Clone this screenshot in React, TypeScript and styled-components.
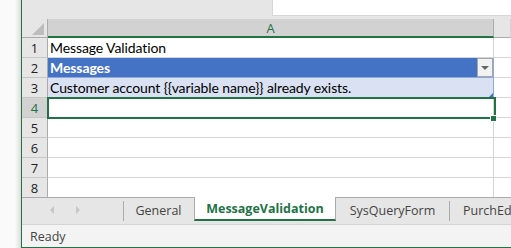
import styled, { createGlobalStyle } from 'styled-components'

const green = '#217346'
const grid = '#d4d4d4'
const uiFont = `'Open Sans', 'Noto Sans', sans-serif`
const cellFont = `'Lato', 'Liberation Sans', sans-serif`

const Global = createGlobalStyle`
	html, body {
		margin: 0;
		padding: 0;
	}
	body {
		width: 511px;
		height: 248px;
		overflow: hidden;
		background: #fafafa;
	}
`

const Frame = styled.div`
	display: flex;
	height: 248px;
`

const Shadow = styled.div`
	flex: none;
	width: 21px;
	background: linear-gradient(to right, #fafafa 0, #fafafa 15px, #dcdcdc 21px);
`

const Window = styled.div`
	flex: 1;
	min-width: 0;
	display: flex;
	flex-direction: column;
	border-left: 1px solid ${green};
	border-bottom: 1px solid ${green};
	overflow: hidden;
`

const TopBar = styled.div`
	flex: none;
	height: 19px;
	display: flex;
	align-items: flex-start;
	padding-left: 250px;
	background: #e6e6e6;
`

const FormulaBox = styled.div`
	flex: 1;
	height: 15px;
	background: #fff;
	border-left: 1px solid #d6d6d6;
	border-bottom: 1px solid #d6d6d6;
`

const Sheet = styled.div`
	display: grid;
	grid-template-columns: 26px 446px 1fr;
`

const HeadCell = styled.div<{ $selected?: boolean; $corner?: boolean }>`
	position: relative;
	height: ${(p) => (p.$selected ? '17px' : '18px')};
	display: flex;
	align-items: center;
	justify-content: center;
	font: 13px ${uiFont};
	color: ${(p) => (p.$selected ? green : '#444')};
	background: ${(p) => (p.$selected ? '#d2d2d2' : '#e6e6e6')};
	border-bottom: ${(p) => (p.$selected ? `2px solid ${green}` : '1px solid #ababab')};
	border-right: 1px solid ${(p) => (p.$corner ? '#ababab' : p.$selected ? '#ababab' : grid)};
`

const CornerMark = styled.div`
	position: absolute;
	right: 3px;
	bottom: 2px;
	width: 0;
	height: 0;
	border-left: 12px solid transparent;
	border-bottom: 12px solid #bdbdbd;
`

const Body = styled.div`
	position: relative;
	height: 159px;
	overflow: hidden;
	display: grid;
	grid-template-columns: 26px 446px 1fr;
	grid-auto-rows: 20px;
`

const RowHead = styled.div<{ $selected?: boolean }>`
	box-sizing: border-box;
	display: flex;
	align-items: center;
	justify-content: center;
	font: 13px ${uiFont};
	color: ${(p) => (p.$selected ? green : '#222')};
	background: ${(p) => (p.$selected ? '#d2d2d2' : '#e6e6e6')};
	border-right: 1px solid #ababab;
	border-bottom: 1px solid #c6c6c6;
`

type Kind = 'plain' | 'header' | 'data'

const Cell = styled.div<{ $kind?: Kind }>`
	position: relative;
	box-sizing: border-box;
	display: flex;
	align-items: center;
	padding-left: 2px;
	white-space: nowrap;
	letter-spacing: -0.1px;
	font: ${(p) => (p.$kind === 'header' ? 700 : 400)} 14px ${cellFont};
	color: ${(p) => (p.$kind === 'header' ? '#fff' : '#000')};
	background: ${(p) => (p.$kind === 'header' ? '#4472c4' : p.$kind === 'data' ? '#d9e1f2' : '#fff')};
	border-right: 1px solid ${(p) => (p.$kind === 'header' || p.$kind === 'data' ? '#8ea9db' : grid)};
	border-bottom: 1px solid ${(p) => (p.$kind === 'header' ? '#8ea9db' : p.$kind === 'data' ? '#d9e1f2' : grid)};
`

const Spare = styled.div`
	box-sizing: border-box;
	background: #fff;
	border-bottom: 1px solid ${grid};
`

const FilterButton = styled.div`
	position: absolute;
	right: 0;
	top: 0;
	bottom: 0;
	width: 16px;
	box-sizing: border-box;
	display: flex;
	align-items: center;
	justify-content: center;
	background: #f2f2f2;
	border: 1px solid #a6a6a6;
	&::after {
		content: '';
		border-left: 4px solid transparent;
		border-right: 4px solid transparent;
		border-top: 4px solid #666;
	}
`

const ResizeMark = styled.div`
	position: absolute;
	right: 0;
	bottom: 0;
	width: 0;
	height: 0;
	border-left: 4px solid transparent;
	border-bottom: 4px solid #4472c4;
`

const Selection = styled.div`
	position: absolute;
	left: 25px;
	top: 59px;
	width: 449px;
	height: 22px;
	box-sizing: border-box;
	border: 2px solid ${green};
	pointer-events: none;
`

const FillHandle = styled.div`
	position: absolute;
	left: 468px;
	top: 77px;
	width: 5px;
	height: 5px;
	background: ${green};
	border: 1px solid #fff;
`

const TabBar = styled.div`
	flex: none;
	height: 28px;
	display: flex;
	align-items: flex-start;
	background: #e6e6e6;
	border-bottom: 1px solid #d4d4d4;
	box-sizing: border-box;
`

const Nav = styled.div`
	flex: none;
	width: 101px;
	height: 25px;
	display: flex;
	align-items: center;
	gap: 22px;
	padding-left: 28px;
	box-sizing: border-box;
	border-top: 1px solid #ababab;
`

const Arrow = styled.span<{ $dir: 'left' | 'right' }>`
	width: 0;
	height: 0;
	border-top: 4px solid transparent;
	border-bottom: 4px solid transparent;
	${(p) => (p.$dir === 'left' ? 'border-right: 4px solid #c6c6c6;' : 'border-left: 4px solid #c6c6c6;')}
`

const Tab = styled.div<{ $active?: boolean; $divider?: boolean; $width?: number }>`
	position: relative;
	flex: none;
	width: ${(p) => (p.$width ? `${p.$width}px` : 'auto')};
	height: ${(p) => (p.$active ? '24px' : '25px')};
	box-sizing: border-box;
	display: flex;
	align-items: center;
	justify-content: center;
	white-space: nowrap;
	font: ${(p) => (p.$active ? 700 : 400)} 12.5px ${uiFont};
	color: ${(p) => (p.$active ? green : '#444')};
	background: ${(p) => (p.$active ? '#fff' : 'transparent')};
	border-top: ${(p) => (p.$active ? 'none' : '1px solid #ababab')};
	border-left: ${(p) => (p.$active ? '1px solid #ababab' : 'none')};
	border-right: ${(p) => (p.$active ? '1px solid #ababab' : 'none')};
	border-bottom: ${(p) => (p.$active ? `2px solid ${green}` : 'none')};
	${(p) =>
		p.$divider &&
		`&::before {
			content: '';
			position: absolute;
			left: 0;
			top: 3px;
			bottom: 1px;
			border-left: 1px solid #ababab;
		}`}
`

const LastTab = styled(Tab)`
	flex: 1;
	min-width: 0;
	overflow: hidden;
	justify-content: flex-start;
	padding-left: 14px;
`

const StatusBar = styled.div`
	flex: 1;
	display: flex;
	align-items: center;
	padding-left: 8px;
	font: 12.5px ${uiFont};
	color: #444;
	background: #f3f3f3;
`

const rows: { n: number; kind?: Kind; text?: string }[] = [
	{ n: 1, kind: 'plain', text: 'Message Validation' },
	{ n: 2, kind: 'header', text: 'Messages' },
	{ n: 3, kind: 'data', text: 'Customer account {{variable name}} already exists.' },
	{ n: 4 },
	{ n: 5 },
	{ n: 6 },
	{ n: 7 },
	{ n: 8 },
]

const App = () => {
	return (
		<>
			<Global />
			<Frame>
				<Shadow />
				<Window>
					<TopBar>
						<FormulaBox />
					</TopBar>
					<Sheet>
						<HeadCell $corner>
							<CornerMark />
						</HeadCell>
						<HeadCell $selected>A</HeadCell>
						<HeadCell />
					</Sheet>
					<Body>
						{rows.map((r) => (
							<Row key={r.n} {...r} />
						))}
						<Selection />
						<FillHandle />
					</Body>
					<TabBar>
						<Nav>
							<Arrow $dir='left' />
							<Arrow $dir='right' />
						</Nav>
						<Tab $divider $width={71}>General</Tab>
						<Tab $active $width={142}>MessageValidation</Tab>
						<Tab $width={113}>SysQueryForm</Tab>
						<LastTab $divider>PurchEd</LastTab>
					</TabBar>
					<StatusBar>Ready</StatusBar>
				</Window>
			</Frame>
		</>
	)
}

const Row = ({ n, kind, text }: { n: number; kind?: Kind; text?: string }) => (
	<>
		<RowHead $selected={n === 4}>{n}</RowHead>
		<Cell $kind={kind ?? 'plain'}>
			{text}
			{kind === 'header' && <FilterButton />}
			{kind === 'data' && <ResizeMark />}
		</Cell>
		<Spare />
	</>
)

export default App
